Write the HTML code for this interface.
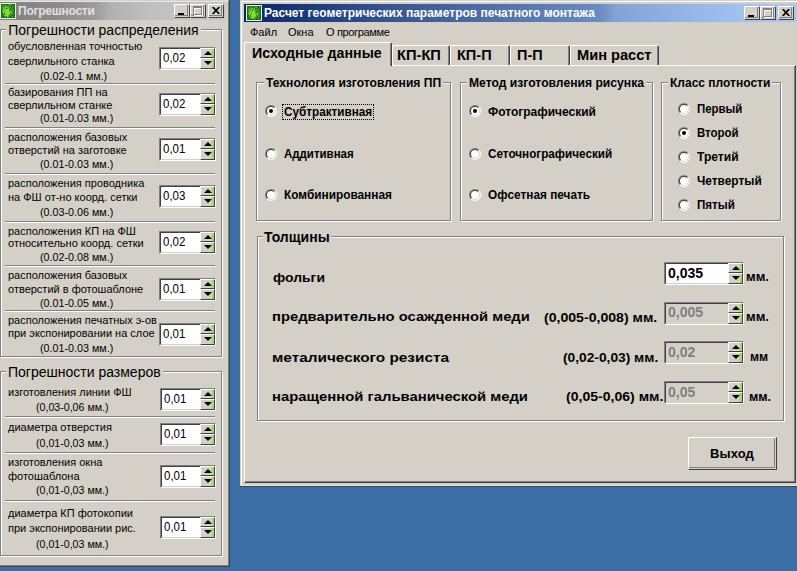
<!DOCTYPE html><html><head><meta charset="utf-8"><style>
html,body{margin:0;padding:0;width:797px;height:571px;overflow:hidden;background:#3a6ea5;position:relative}
body>div{position:absolute;box-sizing:content-box}
.t{white-space:pre;font-family:"Liberation Sans",sans-serif}
</style></head><body>
<svg width="0" height="0" style="position:absolute"><defs><clipPath id="rtl"><polygon points="0,0 12,0 0,12"/></clipPath><clipPath id="rbr"><polygon points="12,0 12,12 0,12"/></clipPath></defs></svg>
<div style="left:-10px;top:0px;width:240px;height:567px;background:#d4d0c8"></div>
<div style="left:-10px;top:1px;width:238px;height:1px;background:#e8e8e8"></div>
<div style="left:228px;top:1px;width:1px;height:565px;background:#808080"></div>
<div style="left:229px;top:0px;width:1px;height:567px;background:#404040"></div>
<div style="left:-10px;top:565px;width:238px;height:1px;background:#808080"></div>
<div style="left:-10px;top:566px;width:240px;height:1px;background:#404040"></div>
<div style="left:0px;top:2px;width:226px;height:18px;background:linear-gradient(to right,#808080 0px,#8c8c8c 60px,#9c9c9c 95px,#b0b0b0 110px,#c0c0c0 150px,#c6c6c6 226px)"></div>
<svg style="position:absolute;left:0px;top:3px" width="16" height="16" viewBox="0 0 16 16" shape-rendering="crispEdges"><rect x="0" y="0" width="16" height="16" fill="#e8f4d8"/><rect x="1" y="1" width="1" height="1" fill="#0e5a10"/><rect x="2" y="1" width="1" height="1" fill="#2e8a1a"/><rect x="3" y="1" width="1" height="1" fill="#0e5a10"/><rect x="4" y="1" width="1" height="1" fill="#2e8a1a"/><rect x="5" y="1" width="1" height="1" fill="#2e8a1a"/><rect x="6" y="1" width="1" height="1" fill="#0e5a10"/><rect x="7" y="1" width="1" height="1" fill="#2e8a1a"/><rect x="8" y="1" width="1" height="1" fill="#2e8a1a"/><rect x="9" y="1" width="1" height="1" fill="#58b828"/><rect x="10" y="1" width="1" height="1" fill="#2e8a1a"/><rect x="11" y="1" width="1" height="1" fill="#2e8a1a"/><rect x="12" y="1" width="1" height="1" fill="#0e5a10"/><rect x="13" y="1" width="1" height="1" fill="#2e8a1a"/><rect x="14" y="1" width="1" height="1" fill="#0e5a10"/><rect x="1" y="2" width="1" height="1" fill="#2e8a1a"/><rect x="2" y="2" width="1" height="1" fill="#0e5a10"/><rect x="3" y="2" width="1" height="1" fill="#58b828"/><rect x="4" y="2" width="1" height="1" fill="#2e8a1a"/><rect x="5" y="2" width="1" height="1" fill="#2e8a1a"/><rect x="6" y="2" width="1" height="1" fill="#58b828"/><rect x="7" y="2" width="1" height="1" fill="#0e5a10"/><rect x="8" y="2" width="1" height="1" fill="#2e8a1a"/><rect x="9" y="2" width="1" height="1" fill="#2e8a1a"/><rect x="10" y="2" width="1" height="1" fill="#58b828"/><rect x="11" y="2" width="1" height="1" fill="#2e8a1a"/><rect x="12" y="2" width="1" height="1" fill="#0e5a10"/><rect x="13" y="2" width="1" height="1" fill="#2e8a1a"/><rect x="14" y="2" width="1" height="1" fill="#0e5a10"/><rect x="1" y="3" width="1" height="1" fill="#0e5a10"/><rect x="2" y="3" width="1" height="1" fill="#2e8a1a"/><rect x="3" y="3" width="1" height="1" fill="#58b828"/><rect x="4" y="3" width="1" height="1" fill="#2e8a1a"/><rect x="5" y="3" width="1" height="1" fill="#58b828"/><rect x="6" y="3" width="1" height="1" fill="#88e030"/><rect x="7" y="3" width="1" height="1" fill="#2e8a1a"/><rect x="8" y="3" width="1" height="1" fill="#58b828"/><rect x="9" y="3" width="1" height="1" fill="#2e8a1a"/><rect x="10" y="3" width="1" height="1" fill="#2e8a1a"/><rect x="11" y="3" width="1" height="1" fill="#0e5a10"/><rect x="12" y="3" width="1" height="1" fill="#58b828"/><rect x="13" y="3" width="1" height="1" fill="#2e8a1a"/><rect x="14" y="3" width="1" height="1" fill="#0e5a10"/><rect x="1" y="4" width="1" height="1" fill="#2e8a1a"/><rect x="2" y="4" width="1" height="1" fill="#58b828"/><rect x="3" y="4" width="1" height="1" fill="#2e8a1a"/><rect x="4" y="4" width="1" height="1" fill="#58b828"/><rect x="5" y="4" width="1" height="1" fill="#88e030"/><rect x="6" y="4" width="1" height="1" fill="#2e8a1a"/><rect x="7" y="4" width="1" height="1" fill="#88e030"/><rect x="8" y="4" width="1" height="1" fill="#58b828"/><rect x="9" y="4" width="1" height="1" fill="#2e8a1a"/><rect x="10" y="4" width="1" height="1" fill="#58b828"/><rect x="11" y="4" width="1" height="1" fill="#2e8a1a"/><rect x="12" y="4" width="1" height="1" fill="#2e8a1a"/><rect x="13" y="4" width="1" height="1" fill="#0e5a10"/><rect x="14" y="4" width="1" height="1" fill="#2e8a1a"/><rect x="1" y="5" width="1" height="1" fill="#0e5a10"/><rect x="2" y="5" width="1" height="1" fill="#2e8a1a"/><rect x="3" y="5" width="1" height="1" fill="#a0a0b0"/><rect x="4" y="5" width="1" height="1" fill="#58b828"/><rect x="5" y="5" width="1" height="1" fill="#88e030"/><rect x="6" y="5" width="1" height="1" fill="#202820"/><rect x="7" y="5" width="1" height="1" fill="#58b828"/><rect x="8" y="5" width="1" height="1" fill="#88e030"/><rect x="9" y="5" width="1" height="1" fill="#2e8a1a"/><rect x="10" y="5" width="1" height="1" fill="#2e8a1a"/><rect x="11" y="5" width="1" height="1" fill="#58b828"/><rect x="12" y="5" width="1" height="1" fill="#2e8a1a"/><rect x="13" y="5" width="1" height="1" fill="#0e5a10"/><rect x="14" y="5" width="1" height="1" fill="#2e8a1a"/><rect x="1" y="6" width="1" height="1" fill="#2e8a1a"/><rect x="2" y="6" width="1" height="1" fill="#58b828"/><rect x="3" y="6" width="1" height="1" fill="#2e8a1a"/><rect x="4" y="6" width="1" height="1" fill="#88e030"/><rect x="5" y="6" width="1" height="1" fill="#58b828"/><rect x="6" y="6" width="1" height="1" fill="#88e030"/><rect x="7" y="6" width="1" height="1" fill="#88e030"/><rect x="8" y="6" width="1" height="1" fill="#88e030"/><rect x="9" y="6" width="1" height="1" fill="#58b828"/><rect x="10" y="6" width="1" height="1" fill="#2e8a1a"/><rect x="11" y="6" width="1" height="1" fill="#0e5a10"/><rect x="12" y="6" width="1" height="1" fill="#2e8a1a"/><rect x="13" y="6" width="1" height="1" fill="#58b828"/><rect x="14" y="6" width="1" height="1" fill="#0e5a10"/><rect x="1" y="7" width="1" height="1" fill="#0e5a10"/><rect x="2" y="7" width="1" height="1" fill="#2e8a1a"/><rect x="3" y="7" width="1" height="1" fill="#58b828"/><rect x="4" y="7" width="1" height="1" fill="#88e030"/><rect x="5" y="7" width="1" height="1" fill="#88e030"/><rect x="6" y="7" width="1" height="1" fill="#88e030"/><rect x="7" y="7" width="1" height="1" fill="#88e030"/><rect x="8" y="7" width="1" height="1" fill="#88e030"/><rect x="9" y="7" width="1" height="1" fill="#2e8a1a"/><rect x="10" y="7" width="1" height="1" fill="#58b828"/><rect x="11" y="7" width="1" height="1" fill="#2e8a1a"/><rect x="12" y="7" width="1" height="1" fill="#58b828"/><rect x="13" y="7" width="1" height="1" fill="#2e8a1a"/><rect x="14" y="7" width="1" height="1" fill="#0e5a10"/><rect x="1" y="8" width="1" height="1" fill="#2e8a1a"/><rect x="2" y="8" width="1" height="1" fill="#58b828"/><rect x="3" y="8" width="1" height="1" fill="#88e030"/><rect x="4" y="8" width="1" height="1" fill="#88e030"/><rect x="5" y="8" width="1" height="1" fill="#2e8a1a"/><rect x="6" y="8" width="1" height="1" fill="#88e030"/><rect x="7" y="8" width="1" height="1" fill="#88e030"/><rect x="8" y="8" width="1" height="1" fill="#88e030"/><rect x="9" y="8" width="1" height="1" fill="#58b828"/><rect x="10" y="8" width="1" height="1" fill="#2e8a1a"/><rect x="11" y="8" width="1" height="1" fill="#88e030"/><rect x="12" y="8" width="1" height="1" fill="#2e8a1a"/><rect x="13" y="8" width="1" height="1" fill="#0e5a10"/><rect x="14" y="8" width="1" height="1" fill="#2e8a1a"/><rect x="1" y="9" width="1" height="1" fill="#0e5a10"/><rect x="2" y="9" width="1" height="1" fill="#2e8a1a"/><rect x="3" y="9" width="1" height="1" fill="#88e030"/><rect x="4" y="9" width="1" height="1" fill="#58b828"/><rect x="5" y="9" width="1" height="1" fill="#88e030"/><rect x="6" y="9" width="1" height="1" fill="#88e030"/><rect x="7" y="9" width="1" height="1" fill="#88e030"/><rect x="8" y="9" width="1" height="1" fill="#88e030"/><rect x="9" y="9" width="1" height="1" fill="#88e030"/><rect x="10" y="9" width="1" height="1" fill="#58b828"/><rect x="11" y="9" width="1" height="1" fill="#88e030"/><rect x="12" y="9" width="1" height="1" fill="#2e8a1a"/><rect x="13" y="9" width="1" height="1" fill="#58b828"/><rect x="14" y="9" width="1" height="1" fill="#0e5a10"/><rect x="1" y="10" width="1" height="1" fill="#2e8a1a"/><rect x="2" y="10" width="1" height="1" fill="#0e5a10"/><rect x="3" y="10" width="1" height="1" fill="#58b828"/><rect x="4" y="10" width="1" height="1" fill="#2e8a1a"/><rect x="5" y="10" width="1" height="1" fill="#88e030"/><rect x="6" y="10" width="1" height="1" fill="#88e030"/><rect x="7" y="10" width="1" height="1" fill="#88e030"/><rect x="8" y="10" width="1" height="1" fill="#88e030"/><rect x="9" y="10" width="1" height="1" fill="#88e030"/><rect x="10" y="10" width="1" height="1" fill="#2e8a1a"/><rect x="11" y="10" width="1" height="1" fill="#58b828"/><rect x="12" y="10" width="1" height="1" fill="#2e8a1a"/><rect x="13" y="10" width="1" height="1" fill="#0e5a10"/><rect x="14" y="10" width="1" height="1" fill="#2e8a1a"/><rect x="1" y="11" width="1" height="1" fill="#0e5a10"/><rect x="2" y="11" width="1" height="1" fill="#2e8a1a"/><rect x="3" y="11" width="1" height="1" fill="#58b828"/><rect x="4" y="11" width="1" height="1" fill="#2e8a1a"/><rect x="5" y="11" width="1" height="1" fill="#58b828"/><rect x="6" y="11" width="1" height="1" fill="#88e030"/><rect x="7" y="11" width="1" height="1" fill="#88e030"/><rect x="8" y="11" width="1" height="1" fill="#58b828"/><rect x="9" y="11" width="1" height="1" fill="#88e030"/><rect x="10" y="11" width="1" height="1" fill="#2e8a1a"/><rect x="11" y="11" width="1" height="1" fill="#0e5a10"/><rect x="12" y="11" width="1" height="1" fill="#58b828"/><rect x="13" y="11" width="1" height="1" fill="#2e8a1a"/><rect x="14" y="11" width="1" height="1" fill="#0e5a10"/><rect x="1" y="12" width="1" height="1" fill="#2e8a1a"/><rect x="2" y="12" width="1" height="1" fill="#0e5a10"/><rect x="3" y="12" width="1" height="1" fill="#2e8a1a"/><rect x="4" y="12" width="1" height="1" fill="#58b828"/><rect x="5" y="12" width="1" height="1" fill="#88e030"/><rect x="6" y="12" width="1" height="1" fill="#88e030"/><rect x="7" y="12" width="1" height="1" fill="#88e030"/><rect x="8" y="12" width="1" height="1" fill="#58b828"/><rect x="9" y="12" width="1" height="1" fill="#2e8a1a"/><rect x="10" y="12" width="1" height="1" fill="#58b828"/><rect x="11" y="12" width="1" height="1" fill="#2e8a1a"/><rect x="12" y="12" width="1" height="1" fill="#0e5a10"/><rect x="13" y="12" width="1" height="1" fill="#2e8a1a"/><rect x="14" y="12" width="1" height="1" fill="#0e5a10"/><rect x="1" y="13" width="1" height="1" fill="#0e5a10"/><rect x="2" y="13" width="1" height="1" fill="#2e8a1a"/><rect x="3" y="13" width="1" height="1" fill="#0e5a10"/><rect x="4" y="13" width="1" height="1" fill="#2e8a1a"/><rect x="5" y="13" width="1" height="1" fill="#58b828"/><rect x="6" y="13" width="1" height="1" fill="#2e8a1a"/><rect x="7" y="13" width="1" height="1" fill="#88e030"/><rect x="8" y="13" width="1" height="1" fill="#58b828"/><rect x="9" y="13" width="1" height="1" fill="#2e8a1a"/><rect x="10" y="13" width="1" height="1" fill="#0e5a10"/><rect x="11" y="13" width="1" height="1" fill="#2e8a1a"/><rect x="12" y="13" width="1" height="1" fill="#58b828"/><rect x="13" y="13" width="1" height="1" fill="#0e5a10"/><rect x="14" y="13" width="1" height="1" fill="#2e8a1a"/><rect x="1" y="14" width="1" height="1" fill="#2e8a1a"/><rect x="2" y="14" width="1" height="1" fill="#0e5a10"/><rect x="3" y="14" width="1" height="1" fill="#2e8a1a"/><rect x="4" y="14" width="1" height="1" fill="#0e5a10"/><rect x="5" y="14" width="1" height="1" fill="#2e8a1a"/><rect x="6" y="14" width="1" height="1" fill="#0e5a10"/><rect x="7" y="14" width="1" height="1" fill="#2e8a1a"/><rect x="8" y="14" width="1" height="1" fill="#0e5a10"/><rect x="9" y="14" width="1" height="1" fill="#2e8a1a"/><rect x="10" y="14" width="1" height="1" fill="#0e5a10"/><rect x="11" y="14" width="1" height="1" fill="#2e8a1a"/><rect x="12" y="14" width="1" height="1" fill="#0e5a10"/><rect x="13" y="14" width="1" height="1" fill="#2e8a1a"/><rect x="14" y="14" width="1" height="1" fill="#0e5a10"/></svg>
<div class="t" style="left:18px;top:4.6px;font-size:12px;line-height:12px;font-weight:bold;color:#e4e0dc;letter-spacing:-0.25px;">Погрешности</div>
<div style="left:174px;top:4px;width:14px;height:12px;border-top:1px solid #fff;border-left:1px solid #fff;border-right:1px solid #404040;border-bottom:1px solid #404040;background:#d4d0c8"></div>
<div style="left:175px;top:5px;width:12px;height:10px;border-right:1px solid #808080;border-bottom:1px solid #808080;"></div>
<div style="left:178px;top:13px;width:6px;height:2px;background:#000"></div>
<div style="left:190px;top:4px;width:14px;height:12px;border-top:1px solid #fff;border-left:1px solid #fff;border-right:1px solid #404040;border-bottom:1px solid #404040;background:#d4d0c8"></div>
<div style="left:191px;top:5px;width:12px;height:10px;border-right:1px solid #808080;border-bottom:1px solid #808080;"></div>
<div style="left:194px;top:7px;width:7px;height:6px;border:1px solid #fff;border-top-width:2px"></div>
<div style="left:193px;top:6px;width:7px;height:6px;border:1px solid #808080;border-top-width:2px"></div>
<div style="left:208px;top:4px;width:14px;height:12px;border-top:1px solid #fff;border-left:1px solid #fff;border-right:1px solid #404040;border-bottom:1px solid #404040;background:#d4d0c8"></div>
<div style="left:209px;top:5px;width:12px;height:10px;border-right:1px solid #808080;border-bottom:1px solid #808080;"></div>
<svg style="position:absolute;left:212px;top:7px" width="8" height="7" viewBox="0 0 8 7"><path d="M0.7 0 L7.3 7 M7.3 0 L0.7 7" stroke="#000" stroke-width="1.7"/></svg>
<div style="left:1px;top:30px;width:220px;height:326px;border:1px solid #fff;"></div>
<div style="left:0px;top:29px;width:220px;height:326px;border:1px solid #808080;"></div>
<div style="left:1px;top:372px;width:220px;height:183px;border:1px solid #fff;"></div>
<div style="left:0px;top:371px;width:220px;height:183px;border:1px solid #808080;"></div>
<div class="t" style="left:6.2px;top:23px;font-size:14px;line-height:14px;background:#d4d0c8;padding:0 2px">Погрешности распределения</div>
<div class="t" style="left:6px;top:364.5px;font-size:14px;line-height:14px;background:#d4d0c8;padding:0 2px">Погрешности размеров</div>
<div class="t" style="left:8px;top:40.65px;font-size:11px;line-height:11px;font-weight:normal;color:#000;letter-spacing:0px;">обусловленная точностью</div>
<div class="t" style="left:8px;top:55.65px;font-size:11px;line-height:11px;font-weight:normal;color:#000;letter-spacing:0px;">сверлильного станка</div>
<div class="t" style="left:40px;top:71.45px;font-size:11px;line-height:11px;font-weight:normal;color:#000;transform:scaleX(0.9748);transform-origin:0 0;">(0.02-0.1 мм.)</div>
<div style="left:159px;top:47px;width:55px;height:21px;border-top:1px solid #808080;border-left:1px solid #808080;border-right:1px solid #fff;border-bottom:1px solid #fff;"></div>
<div style="left:160px;top:48px;width:39px;height:19px;border-top:1px solid #404040;border-left:1px solid #404040;border-bottom:1px solid #d4d0c8;background:#fff"></div>
<div style="left:200px;top:48px;width:13px;height:8px;border-top:1px solid #fff;border-left:1px solid #fff;border-right:1px solid #404040;border-bottom:1px solid #404040;background:linear-gradient(to right,#d4d0c8 0,#d4d0c8 66%,#c8e0b0 74%,#a0e060 86%,#b0c0a0 100%)"></div>
<svg style="position:absolute;left:203.5px;top:51px" width="8" height="4" viewBox="0 0 8 4"><path d="M4 0 L8 4 L0 4 Z" fill="#000"/></svg>
<div style="left:200px;top:58px;width:13px;height:9px;border-top:1px solid #fff;border-left:1px solid #fff;border-right:1px solid #404040;border-bottom:1px solid #404040;background:linear-gradient(to right,#d4d0c8 0,#d4d0c8 66%,#c8e0b0 74%,#a0e060 86%,#b0c0a0 100%)"></div>
<svg style="position:absolute;left:203.5px;top:61px" width="8" height="4" viewBox="0 0 8 4"><path d="M0 0 L8 0 L4 4 Z" fill="#000"/></svg>
<div class="t" style="left:163px;top:50.52px;font-size:13.5px;line-height:13.5px;font-weight:normal;color:#000;letter-spacing:0px;transform:scaleX(0.85);transform-origin:0 0">0,02</div>
<div style="left:5px;top:83px;width:210px;height:1px;background:#808080"></div>
<div style="left:5px;top:84px;width:210px;height:1px;background:#fff"></div>
<div class="t" style="left:8px;top:86.65px;font-size:11px;line-height:11px;font-weight:normal;color:#000;letter-spacing:0px;">базирования ПП на</div>
<div class="t" style="left:8px;top:100.15px;font-size:11px;line-height:11px;font-weight:normal;color:#000;letter-spacing:0px;">сверлильном станке</div>
<div class="t" style="left:40px;top:112.95px;font-size:11px;line-height:11px;font-weight:normal;color:#000;transform:scaleX(0.9767);transform-origin:0 0;">(0.01-0.03 мм.)</div>
<div style="left:159px;top:93px;width:55px;height:21px;border-top:1px solid #808080;border-left:1px solid #808080;border-right:1px solid #fff;border-bottom:1px solid #fff;"></div>
<div style="left:160px;top:94px;width:39px;height:19px;border-top:1px solid #404040;border-left:1px solid #404040;border-bottom:1px solid #d4d0c8;background:#fff"></div>
<div style="left:200px;top:94px;width:13px;height:8px;border-top:1px solid #fff;border-left:1px solid #fff;border-right:1px solid #404040;border-bottom:1px solid #404040;background:linear-gradient(to right,#d4d0c8 0,#d4d0c8 66%,#c8e0b0 74%,#a0e060 86%,#b0c0a0 100%)"></div>
<svg style="position:absolute;left:203.5px;top:97px" width="8" height="4" viewBox="0 0 8 4"><path d="M4 0 L8 4 L0 4 Z" fill="#000"/></svg>
<div style="left:200px;top:104px;width:13px;height:9px;border-top:1px solid #fff;border-left:1px solid #fff;border-right:1px solid #404040;border-bottom:1px solid #404040;background:linear-gradient(to right,#d4d0c8 0,#d4d0c8 66%,#c8e0b0 74%,#a0e060 86%,#b0c0a0 100%)"></div>
<svg style="position:absolute;left:203.5px;top:107px" width="8" height="4" viewBox="0 0 8 4"><path d="M0 0 L8 0 L4 4 Z" fill="#000"/></svg>
<div class="t" style="left:163px;top:96.53px;font-size:13.5px;line-height:13.5px;font-weight:normal;color:#000;letter-spacing:0px;transform:scaleX(0.85);transform-origin:0 0">0,02</div>
<div style="left:5px;top:127px;width:210px;height:1px;background:#808080"></div>
<div style="left:5px;top:128px;width:210px;height:1px;background:#fff"></div>
<div class="t" style="left:8px;top:131.65px;font-size:11px;line-height:11px;font-weight:normal;color:#000;letter-spacing:0px;">расположения базовых</div>
<div class="t" style="left:8px;top:144.65px;font-size:11px;line-height:11px;font-weight:normal;color:#000;letter-spacing:0px;">отверстий на заготовке</div>
<div class="t" style="left:40px;top:159.45px;font-size:11px;line-height:11px;font-weight:normal;color:#000;transform:scaleX(0.9767);transform-origin:0 0;">(0.01-0.03 мм.)</div>
<div style="left:159px;top:138px;width:55px;height:21px;border-top:1px solid #808080;border-left:1px solid #808080;border-right:1px solid #fff;border-bottom:1px solid #fff;"></div>
<div style="left:160px;top:139px;width:39px;height:19px;border-top:1px solid #404040;border-left:1px solid #404040;border-bottom:1px solid #d4d0c8;background:#fff"></div>
<div style="left:200px;top:139px;width:13px;height:8px;border-top:1px solid #fff;border-left:1px solid #fff;border-right:1px solid #404040;border-bottom:1px solid #404040;background:linear-gradient(to right,#d4d0c8 0,#d4d0c8 66%,#c8e0b0 74%,#a0e060 86%,#b0c0a0 100%)"></div>
<svg style="position:absolute;left:203.5px;top:142px" width="8" height="4" viewBox="0 0 8 4"><path d="M4 0 L8 4 L0 4 Z" fill="#000"/></svg>
<div style="left:200px;top:149px;width:13px;height:9px;border-top:1px solid #fff;border-left:1px solid #fff;border-right:1px solid #404040;border-bottom:1px solid #404040;background:linear-gradient(to right,#d4d0c8 0,#d4d0c8 66%,#c8e0b0 74%,#a0e060 86%,#b0c0a0 100%)"></div>
<svg style="position:absolute;left:203.5px;top:152px" width="8" height="4" viewBox="0 0 8 4"><path d="M0 0 L8 0 L4 4 Z" fill="#000"/></svg>
<div class="t" style="left:163px;top:141.53px;font-size:13.5px;line-height:13.5px;font-weight:normal;color:#000;letter-spacing:0px;transform:scaleX(0.85);transform-origin:0 0">0,01</div>
<div style="left:5px;top:173px;width:210px;height:1px;background:#808080"></div>
<div style="left:5px;top:174px;width:210px;height:1px;background:#fff"></div>
<div class="t" style="left:8px;top:177.65px;font-size:11px;line-height:11px;font-weight:normal;color:#000;letter-spacing:0px;">расположения проводника</div>
<div class="t" style="left:8px;top:191.65px;font-size:11px;line-height:11px;font-weight:normal;color:#000;letter-spacing:0px;">на ФШ от-но коорд. сетки</div>
<div class="t" style="left:40px;top:207.45px;font-size:11px;line-height:11px;font-weight:normal;color:#000;transform:scaleX(0.9767);transform-origin:0 0;">(0.03-0.06 мм.)</div>
<div style="left:159px;top:185px;width:55px;height:21px;border-top:1px solid #808080;border-left:1px solid #808080;border-right:1px solid #fff;border-bottom:1px solid #fff;"></div>
<div style="left:160px;top:186px;width:39px;height:19px;border-top:1px solid #404040;border-left:1px solid #404040;border-bottom:1px solid #d4d0c8;background:#fff"></div>
<div style="left:200px;top:186px;width:13px;height:8px;border-top:1px solid #fff;border-left:1px solid #fff;border-right:1px solid #404040;border-bottom:1px solid #404040;background:linear-gradient(to right,#d4d0c8 0,#d4d0c8 66%,#c8e0b0 74%,#a0e060 86%,#b0c0a0 100%)"></div>
<svg style="position:absolute;left:203.5px;top:189px" width="8" height="4" viewBox="0 0 8 4"><path d="M4 0 L8 4 L0 4 Z" fill="#000"/></svg>
<div style="left:200px;top:196px;width:13px;height:9px;border-top:1px solid #fff;border-left:1px solid #fff;border-right:1px solid #404040;border-bottom:1px solid #404040;background:linear-gradient(to right,#d4d0c8 0,#d4d0c8 66%,#c8e0b0 74%,#a0e060 86%,#b0c0a0 100%)"></div>
<svg style="position:absolute;left:203.5px;top:199px" width="8" height="4" viewBox="0 0 8 4"><path d="M0 0 L8 0 L4 4 Z" fill="#000"/></svg>
<div class="t" style="left:163px;top:188.53px;font-size:13.5px;line-height:13.5px;font-weight:normal;color:#000;letter-spacing:0px;transform:scaleX(0.85);transform-origin:0 0">0,03</div>
<div style="left:5px;top:221px;width:210px;height:1px;background:#808080"></div>
<div style="left:5px;top:222px;width:210px;height:1px;background:#fff"></div>
<div class="t" style="left:8px;top:225.65px;font-size:11px;line-height:11px;font-weight:normal;color:#000;letter-spacing:0px;">расположения КП на ФШ</div>
<div class="t" style="left:8px;top:237.65px;font-size:11px;line-height:11px;font-weight:normal;color:#000;letter-spacing:0px;">относительно коорд. сетки</div>
<div class="t" style="left:40px;top:252.45px;font-size:11px;line-height:11px;font-weight:normal;color:#000;transform:scaleX(0.9767);transform-origin:0 0;">(0.02-0.08 мм.)</div>
<div style="left:159px;top:231px;width:55px;height:21px;border-top:1px solid #808080;border-left:1px solid #808080;border-right:1px solid #fff;border-bottom:1px solid #fff;"></div>
<div style="left:160px;top:232px;width:39px;height:19px;border-top:1px solid #404040;border-left:1px solid #404040;border-bottom:1px solid #d4d0c8;background:#fff"></div>
<div style="left:200px;top:232px;width:13px;height:8px;border-top:1px solid #fff;border-left:1px solid #fff;border-right:1px solid #404040;border-bottom:1px solid #404040;background:linear-gradient(to right,#d4d0c8 0,#d4d0c8 66%,#c8e0b0 74%,#a0e060 86%,#b0c0a0 100%)"></div>
<svg style="position:absolute;left:203.5px;top:235px" width="8" height="4" viewBox="0 0 8 4"><path d="M4 0 L8 4 L0 4 Z" fill="#000"/></svg>
<div style="left:200px;top:242px;width:13px;height:9px;border-top:1px solid #fff;border-left:1px solid #fff;border-right:1px solid #404040;border-bottom:1px solid #404040;background:linear-gradient(to right,#d4d0c8 0,#d4d0c8 66%,#c8e0b0 74%,#a0e060 86%,#b0c0a0 100%)"></div>
<svg style="position:absolute;left:203.5px;top:245px" width="8" height="4" viewBox="0 0 8 4"><path d="M0 0 L8 0 L4 4 Z" fill="#000"/></svg>
<div class="t" style="left:163px;top:234.53px;font-size:13.5px;line-height:13.5px;font-weight:normal;color:#000;letter-spacing:0px;transform:scaleX(0.85);transform-origin:0 0">0,02</div>
<div style="left:5px;top:265px;width:210px;height:1px;background:#808080"></div>
<div style="left:5px;top:266px;width:210px;height:1px;background:#fff"></div>
<div class="t" style="left:8px;top:269.65px;font-size:11px;line-height:11px;font-weight:normal;color:#000;letter-spacing:0px;">расположения базовых</div>
<div class="t" style="left:8px;top:283.65px;font-size:11px;line-height:11px;font-weight:normal;color:#000;letter-spacing:0px;">отверстий в фотошаблоне</div>
<div class="t" style="left:40px;top:297.95px;font-size:11px;line-height:11px;font-weight:normal;color:#000;transform:scaleX(0.9767);transform-origin:0 0;">(0.01-0.05 мм.)</div>
<div style="left:159px;top:278px;width:55px;height:21px;border-top:1px solid #808080;border-left:1px solid #808080;border-right:1px solid #fff;border-bottom:1px solid #fff;"></div>
<div style="left:160px;top:279px;width:39px;height:19px;border-top:1px solid #404040;border-left:1px solid #404040;border-bottom:1px solid #d4d0c8;background:#fff"></div>
<div style="left:200px;top:279px;width:13px;height:8px;border-top:1px solid #fff;border-left:1px solid #fff;border-right:1px solid #404040;border-bottom:1px solid #404040;background:linear-gradient(to right,#d4d0c8 0,#d4d0c8 66%,#c8e0b0 74%,#a0e060 86%,#b0c0a0 100%)"></div>
<svg style="position:absolute;left:203.5px;top:282px" width="8" height="4" viewBox="0 0 8 4"><path d="M4 0 L8 4 L0 4 Z" fill="#000"/></svg>
<div style="left:200px;top:289px;width:13px;height:9px;border-top:1px solid #fff;border-left:1px solid #fff;border-right:1px solid #404040;border-bottom:1px solid #404040;background:linear-gradient(to right,#d4d0c8 0,#d4d0c8 66%,#c8e0b0 74%,#a0e060 86%,#b0c0a0 100%)"></div>
<svg style="position:absolute;left:203.5px;top:292px" width="8" height="4" viewBox="0 0 8 4"><path d="M0 0 L8 0 L4 4 Z" fill="#000"/></svg>
<div class="t" style="left:163px;top:281.52px;font-size:13.5px;line-height:13.5px;font-weight:normal;color:#000;letter-spacing:0px;transform:scaleX(0.85);transform-origin:0 0">0,01</div>
<div style="left:5px;top:310px;width:210px;height:1px;background:#808080"></div>
<div style="left:5px;top:311px;width:210px;height:1px;background:#fff"></div>
<div class="t" style="left:8px;top:314.65px;font-size:11px;line-height:11px;font-weight:normal;color:#000;letter-spacing:0px;">расположения печатных э-ов</div>
<div class="t" style="left:8px;top:328.15px;font-size:11px;line-height:11px;font-weight:normal;color:#000;letter-spacing:0px;">при экспонировании на слое</div>
<div class="t" style="left:40px;top:342.95px;font-size:11px;line-height:11px;font-weight:normal;color:#000;transform:scaleX(0.9767);transform-origin:0 0;">(0.01-0.03 мм.)</div>
<div style="left:159px;top:323px;width:55px;height:21px;border-top:1px solid #808080;border-left:1px solid #808080;border-right:1px solid #fff;border-bottom:1px solid #fff;"></div>
<div style="left:160px;top:324px;width:39px;height:19px;border-top:1px solid #404040;border-left:1px solid #404040;border-bottom:1px solid #d4d0c8;background:#fff"></div>
<div style="left:200px;top:324px;width:13px;height:8px;border-top:1px solid #fff;border-left:1px solid #fff;border-right:1px solid #404040;border-bottom:1px solid #404040;background:linear-gradient(to right,#d4d0c8 0,#d4d0c8 66%,#c8e0b0 74%,#a0e060 86%,#b0c0a0 100%)"></div>
<svg style="position:absolute;left:203.5px;top:327px" width="8" height="4" viewBox="0 0 8 4"><path d="M4 0 L8 4 L0 4 Z" fill="#000"/></svg>
<div style="left:200px;top:334px;width:13px;height:9px;border-top:1px solid #fff;border-left:1px solid #fff;border-right:1px solid #404040;border-bottom:1px solid #404040;background:linear-gradient(to right,#d4d0c8 0,#d4d0c8 66%,#c8e0b0 74%,#a0e060 86%,#b0c0a0 100%)"></div>
<svg style="position:absolute;left:203.5px;top:337px" width="8" height="4" viewBox="0 0 8 4"><path d="M0 0 L8 0 L4 4 Z" fill="#000"/></svg>
<div class="t" style="left:163px;top:326.52px;font-size:13.5px;line-height:13.5px;font-weight:normal;color:#000;letter-spacing:0px;transform:scaleX(0.85);transform-origin:0 0">0,01</div>
<div class="t" style="left:8px;top:386.65px;font-size:11px;line-height:11px;font-weight:normal;color:#000;letter-spacing:0px;">изготовления линии ФШ</div>
<div class="t" style="left:36px;top:401.95px;font-size:11px;line-height:11px;font-weight:normal;color:#000;transform:scaleX(0.9661);transform-origin:0 0;">(0,03-0,06 мм.)</div>
<div style="left:160px;top:388px;width:54px;height:21px;border-top:1px solid #808080;border-left:1px solid #808080;border-right:1px solid #fff;border-bottom:1px solid #fff;"></div>
<div style="left:161px;top:389px;width:38px;height:19px;border-top:1px solid #404040;border-left:1px solid #404040;border-bottom:1px solid #d4d0c8;background:#fff"></div>
<div style="left:200px;top:389px;width:13px;height:8px;border-top:1px solid #fff;border-left:1px solid #fff;border-right:1px solid #404040;border-bottom:1px solid #404040;background:linear-gradient(to right,#d4d0c8 0,#d4d0c8 66%,#c8e0b0 74%,#a0e060 86%,#b0c0a0 100%)"></div>
<svg style="position:absolute;left:203.5px;top:392px" width="8" height="4" viewBox="0 0 8 4"><path d="M4 0 L8 4 L0 4 Z" fill="#000"/></svg>
<div style="left:200px;top:399px;width:13px;height:9px;border-top:1px solid #fff;border-left:1px solid #fff;border-right:1px solid #404040;border-bottom:1px solid #404040;background:linear-gradient(to right,#d4d0c8 0,#d4d0c8 66%,#c8e0b0 74%,#a0e060 86%,#b0c0a0 100%)"></div>
<svg style="position:absolute;left:203.5px;top:402px" width="8" height="4" viewBox="0 0 8 4"><path d="M0 0 L8 0 L4 4 Z" fill="#000"/></svg>
<div class="t" style="left:164px;top:391.52px;font-size:13.5px;line-height:13.5px;font-weight:normal;color:#000;letter-spacing:0px;transform:scaleX(0.85);transform-origin:0 0">0,01</div>
<div style="left:5px;top:416px;width:210px;height:1px;background:#808080"></div>
<div style="left:5px;top:417px;width:210px;height:1px;background:#fff"></div>
<div class="t" style="left:8px;top:422.15px;font-size:11px;line-height:11px;font-weight:normal;color:#000;letter-spacing:0px;">диаметра отверстия</div>
<div class="t" style="left:36px;top:438.45px;font-size:11px;line-height:11px;font-weight:normal;color:#000;transform:scaleX(0.9661);transform-origin:0 0;">(0,01-0,03 мм.)</div>
<div style="left:160px;top:423px;width:54px;height:21px;border-top:1px solid #808080;border-left:1px solid #808080;border-right:1px solid #fff;border-bottom:1px solid #fff;"></div>
<div style="left:161px;top:424px;width:38px;height:19px;border-top:1px solid #404040;border-left:1px solid #404040;border-bottom:1px solid #d4d0c8;background:#fff"></div>
<div style="left:200px;top:424px;width:13px;height:8px;border-top:1px solid #fff;border-left:1px solid #fff;border-right:1px solid #404040;border-bottom:1px solid #404040;background:linear-gradient(to right,#d4d0c8 0,#d4d0c8 66%,#c8e0b0 74%,#a0e060 86%,#b0c0a0 100%)"></div>
<svg style="position:absolute;left:203.5px;top:427px" width="8" height="4" viewBox="0 0 8 4"><path d="M4 0 L8 4 L0 4 Z" fill="#000"/></svg>
<div style="left:200px;top:434px;width:13px;height:9px;border-top:1px solid #fff;border-left:1px solid #fff;border-right:1px solid #404040;border-bottom:1px solid #404040;background:linear-gradient(to right,#d4d0c8 0,#d4d0c8 66%,#c8e0b0 74%,#a0e060 86%,#b0c0a0 100%)"></div>
<svg style="position:absolute;left:203.5px;top:437px" width="8" height="4" viewBox="0 0 8 4"><path d="M0 0 L8 0 L4 4 Z" fill="#000"/></svg>
<div class="t" style="left:164px;top:426.52px;font-size:13.5px;line-height:13.5px;font-weight:normal;color:#000;letter-spacing:0px;transform:scaleX(0.85);transform-origin:0 0">0,01</div>
<div style="left:5px;top:452px;width:210px;height:1px;background:#808080"></div>
<div style="left:5px;top:453px;width:210px;height:1px;background:#fff"></div>
<div class="t" style="left:8px;top:456.65px;font-size:11px;line-height:11px;font-weight:normal;color:#000;letter-spacing:0px;">изготовления окна</div>
<div class="t" style="left:8px;top:470.65px;font-size:11px;line-height:11px;font-weight:normal;color:#000;letter-spacing:0px;">фотошаблона</div>
<div class="t" style="left:36px;top:485.45px;font-size:11px;line-height:11px;font-weight:normal;color:#000;transform:scaleX(0.9661);transform-origin:0 0;">(0,01-0,03 мм.)</div>
<div style="left:160px;top:465px;width:54px;height:21px;border-top:1px solid #808080;border-left:1px solid #808080;border-right:1px solid #fff;border-bottom:1px solid #fff;"></div>
<div style="left:161px;top:466px;width:38px;height:19px;border-top:1px solid #404040;border-left:1px solid #404040;border-bottom:1px solid #d4d0c8;background:#fff"></div>
<div style="left:200px;top:466px;width:13px;height:8px;border-top:1px solid #fff;border-left:1px solid #fff;border-right:1px solid #404040;border-bottom:1px solid #404040;background:linear-gradient(to right,#d4d0c8 0,#d4d0c8 66%,#c8e0b0 74%,#a0e060 86%,#b0c0a0 100%)"></div>
<svg style="position:absolute;left:203.5px;top:469px" width="8" height="4" viewBox="0 0 8 4"><path d="M4 0 L8 4 L0 4 Z" fill="#000"/></svg>
<div style="left:200px;top:476px;width:13px;height:9px;border-top:1px solid #fff;border-left:1px solid #fff;border-right:1px solid #404040;border-bottom:1px solid #404040;background:linear-gradient(to right,#d4d0c8 0,#d4d0c8 66%,#c8e0b0 74%,#a0e060 86%,#b0c0a0 100%)"></div>
<svg style="position:absolute;left:203.5px;top:479px" width="8" height="4" viewBox="0 0 8 4"><path d="M0 0 L8 0 L4 4 Z" fill="#000"/></svg>
<div class="t" style="left:164px;top:468.52px;font-size:13.5px;line-height:13.5px;font-weight:normal;color:#000;letter-spacing:0px;transform:scaleX(0.85);transform-origin:0 0">0,01</div>
<div style="left:5px;top:500px;width:210px;height:1px;background:#808080"></div>
<div style="left:5px;top:501px;width:210px;height:1px;background:#fff"></div>
<div class="t" style="left:8px;top:507.65px;font-size:11px;line-height:11px;font-weight:normal;color:#000;letter-spacing:0px;">диаметра КП фотокопии</div>
<div class="t" style="left:8px;top:522.65px;font-size:11px;line-height:11px;font-weight:normal;color:#000;letter-spacing:0px;">при экспонировании рис.</div>
<div class="t" style="left:36px;top:539.45px;font-size:11px;line-height:11px;font-weight:normal;color:#000;transform:scaleX(0.9661);transform-origin:0 0;">(0,01-0,03 мм.)</div>
<div style="left:160px;top:516px;width:54px;height:21px;border-top:1px solid #808080;border-left:1px solid #808080;border-right:1px solid #fff;border-bottom:1px solid #fff;"></div>
<div style="left:161px;top:517px;width:38px;height:19px;border-top:1px solid #404040;border-left:1px solid #404040;border-bottom:1px solid #d4d0c8;background:#fff"></div>
<div style="left:200px;top:517px;width:13px;height:8px;border-top:1px solid #fff;border-left:1px solid #fff;border-right:1px solid #404040;border-bottom:1px solid #404040;background:linear-gradient(to right,#d4d0c8 0,#d4d0c8 66%,#c8e0b0 74%,#a0e060 86%,#b0c0a0 100%)"></div>
<svg style="position:absolute;left:203.5px;top:520px" width="8" height="4" viewBox="0 0 8 4"><path d="M4 0 L8 4 L0 4 Z" fill="#000"/></svg>
<div style="left:200px;top:527px;width:13px;height:9px;border-top:1px solid #fff;border-left:1px solid #fff;border-right:1px solid #404040;border-bottom:1px solid #404040;background:linear-gradient(to right,#d4d0c8 0,#d4d0c8 66%,#c8e0b0 74%,#a0e060 86%,#b0c0a0 100%)"></div>
<svg style="position:absolute;left:203.5px;top:530px" width="8" height="4" viewBox="0 0 8 4"><path d="M0 0 L8 0 L4 4 Z" fill="#000"/></svg>
<div class="t" style="left:164px;top:519.52px;font-size:13.5px;line-height:13.5px;font-weight:normal;color:#000;letter-spacing:0px;transform:scaleX(0.85);transform-origin:0 0">0,01</div>
<div style="left:240px;top:0px;width:600px;height:487px;background:#d4d0c8"></div>
<div style="left:241px;top:1px;width:600px;height:1px;background:#fff"></div>
<div style="left:241px;top:1px;width:1px;height:485px;background:#fff"></div>
<div style="left:240px;top:486px;width:600px;height:1px;background:#404040"></div>
<div style="left:241px;top:485px;width:600px;height:1px;background:#f0e8d8"></div>
<div style="left:244px;top:4px;width:553px;height:18px;background:linear-gradient(to right,#0a246a 0px,#33528e 136px,#6a8cc4 356px,#82a2d8 371px,#a0c2f0 496px,#a6caf0 553px)"></div>
<svg style="position:absolute;left:246px;top:5px" width="16" height="16" viewBox="0 0 16 16" shape-rendering="crispEdges"><rect x="0" y="0" width="16" height="16" fill="#e8f4d8"/><rect x="1" y="1" width="1" height="1" fill="#0e5a10"/><rect x="2" y="1" width="1" height="1" fill="#2e8a1a"/><rect x="3" y="1" width="1" height="1" fill="#0e5a10"/><rect x="4" y="1" width="1" height="1" fill="#2e8a1a"/><rect x="5" y="1" width="1" height="1" fill="#2e8a1a"/><rect x="6" y="1" width="1" height="1" fill="#0e5a10"/><rect x="7" y="1" width="1" height="1" fill="#2e8a1a"/><rect x="8" y="1" width="1" height="1" fill="#2e8a1a"/><rect x="9" y="1" width="1" height="1" fill="#58b828"/><rect x="10" y="1" width="1" height="1" fill="#2e8a1a"/><rect x="11" y="1" width="1" height="1" fill="#2e8a1a"/><rect x="12" y="1" width="1" height="1" fill="#0e5a10"/><rect x="13" y="1" width="1" height="1" fill="#2e8a1a"/><rect x="14" y="1" width="1" height="1" fill="#0e5a10"/><rect x="1" y="2" width="1" height="1" fill="#2e8a1a"/><rect x="2" y="2" width="1" height="1" fill="#0e5a10"/><rect x="3" y="2" width="1" height="1" fill="#58b828"/><rect x="4" y="2" width="1" height="1" fill="#2e8a1a"/><rect x="5" y="2" width="1" height="1" fill="#2e8a1a"/><rect x="6" y="2" width="1" height="1" fill="#58b828"/><rect x="7" y="2" width="1" height="1" fill="#0e5a10"/><rect x="8" y="2" width="1" height="1" fill="#2e8a1a"/><rect x="9" y="2" width="1" height="1" fill="#2e8a1a"/><rect x="10" y="2" width="1" height="1" fill="#58b828"/><rect x="11" y="2" width="1" height="1" fill="#2e8a1a"/><rect x="12" y="2" width="1" height="1" fill="#0e5a10"/><rect x="13" y="2" width="1" height="1" fill="#2e8a1a"/><rect x="14" y="2" width="1" height="1" fill="#0e5a10"/><rect x="1" y="3" width="1" height="1" fill="#0e5a10"/><rect x="2" y="3" width="1" height="1" fill="#2e8a1a"/><rect x="3" y="3" width="1" height="1" fill="#58b828"/><rect x="4" y="3" width="1" height="1" fill="#2e8a1a"/><rect x="5" y="3" width="1" height="1" fill="#58b828"/><rect x="6" y="3" width="1" height="1" fill="#88e030"/><rect x="7" y="3" width="1" height="1" fill="#2e8a1a"/><rect x="8" y="3" width="1" height="1" fill="#58b828"/><rect x="9" y="3" width="1" height="1" fill="#2e8a1a"/><rect x="10" y="3" width="1" height="1" fill="#2e8a1a"/><rect x="11" y="3" width="1" height="1" fill="#0e5a10"/><rect x="12" y="3" width="1" height="1" fill="#58b828"/><rect x="13" y="3" width="1" height="1" fill="#2e8a1a"/><rect x="14" y="3" width="1" height="1" fill="#0e5a10"/><rect x="1" y="4" width="1" height="1" fill="#2e8a1a"/><rect x="2" y="4" width="1" height="1" fill="#58b828"/><rect x="3" y="4" width="1" height="1" fill="#2e8a1a"/><rect x="4" y="4" width="1" height="1" fill="#58b828"/><rect x="5" y="4" width="1" height="1" fill="#88e030"/><rect x="6" y="4" width="1" height="1" fill="#2e8a1a"/><rect x="7" y="4" width="1" height="1" fill="#88e030"/><rect x="8" y="4" width="1" height="1" fill="#58b828"/><rect x="9" y="4" width="1" height="1" fill="#2e8a1a"/><rect x="10" y="4" width="1" height="1" fill="#58b828"/><rect x="11" y="4" width="1" height="1" fill="#2e8a1a"/><rect x="12" y="4" width="1" height="1" fill="#2e8a1a"/><rect x="13" y="4" width="1" height="1" fill="#0e5a10"/><rect x="14" y="4" width="1" height="1" fill="#2e8a1a"/><rect x="1" y="5" width="1" height="1" fill="#0e5a10"/><rect x="2" y="5" width="1" height="1" fill="#2e8a1a"/><rect x="3" y="5" width="1" height="1" fill="#a0a0b0"/><rect x="4" y="5" width="1" height="1" fill="#58b828"/><rect x="5" y="5" width="1" height="1" fill="#88e030"/><rect x="6" y="5" width="1" height="1" fill="#202820"/><rect x="7" y="5" width="1" height="1" fill="#58b828"/><rect x="8" y="5" width="1" height="1" fill="#88e030"/><rect x="9" y="5" width="1" height="1" fill="#2e8a1a"/><rect x="10" y="5" width="1" height="1" fill="#2e8a1a"/><rect x="11" y="5" width="1" height="1" fill="#58b828"/><rect x="12" y="5" width="1" height="1" fill="#2e8a1a"/><rect x="13" y="5" width="1" height="1" fill="#0e5a10"/><rect x="14" y="5" width="1" height="1" fill="#2e8a1a"/><rect x="1" y="6" width="1" height="1" fill="#2e8a1a"/><rect x="2" y="6" width="1" height="1" fill="#58b828"/><rect x="3" y="6" width="1" height="1" fill="#2e8a1a"/><rect x="4" y="6" width="1" height="1" fill="#88e030"/><rect x="5" y="6" width="1" height="1" fill="#58b828"/><rect x="6" y="6" width="1" height="1" fill="#88e030"/><rect x="7" y="6" width="1" height="1" fill="#88e030"/><rect x="8" y="6" width="1" height="1" fill="#88e030"/><rect x="9" y="6" width="1" height="1" fill="#58b828"/><rect x="10" y="6" width="1" height="1" fill="#2e8a1a"/><rect x="11" y="6" width="1" height="1" fill="#0e5a10"/><rect x="12" y="6" width="1" height="1" fill="#2e8a1a"/><rect x="13" y="6" width="1" height="1" fill="#58b828"/><rect x="14" y="6" width="1" height="1" fill="#0e5a10"/><rect x="1" y="7" width="1" height="1" fill="#0e5a10"/><rect x="2" y="7" width="1" height="1" fill="#2e8a1a"/><rect x="3" y="7" width="1" height="1" fill="#58b828"/><rect x="4" y="7" width="1" height="1" fill="#88e030"/><rect x="5" y="7" width="1" height="1" fill="#88e030"/><rect x="6" y="7" width="1" height="1" fill="#88e030"/><rect x="7" y="7" width="1" height="1" fill="#88e030"/><rect x="8" y="7" width="1" height="1" fill="#88e030"/><rect x="9" y="7" width="1" height="1" fill="#2e8a1a"/><rect x="10" y="7" width="1" height="1" fill="#58b828"/><rect x="11" y="7" width="1" height="1" fill="#2e8a1a"/><rect x="12" y="7" width="1" height="1" fill="#58b828"/><rect x="13" y="7" width="1" height="1" fill="#2e8a1a"/><rect x="14" y="7" width="1" height="1" fill="#0e5a10"/><rect x="1" y="8" width="1" height="1" fill="#2e8a1a"/><rect x="2" y="8" width="1" height="1" fill="#58b828"/><rect x="3" y="8" width="1" height="1" fill="#88e030"/><rect x="4" y="8" width="1" height="1" fill="#88e030"/><rect x="5" y="8" width="1" height="1" fill="#2e8a1a"/><rect x="6" y="8" width="1" height="1" fill="#88e030"/><rect x="7" y="8" width="1" height="1" fill="#88e030"/><rect x="8" y="8" width="1" height="1" fill="#88e030"/><rect x="9" y="8" width="1" height="1" fill="#58b828"/><rect x="10" y="8" width="1" height="1" fill="#2e8a1a"/><rect x="11" y="8" width="1" height="1" fill="#88e030"/><rect x="12" y="8" width="1" height="1" fill="#2e8a1a"/><rect x="13" y="8" width="1" height="1" fill="#0e5a10"/><rect x="14" y="8" width="1" height="1" fill="#2e8a1a"/><rect x="1" y="9" width="1" height="1" fill="#0e5a10"/><rect x="2" y="9" width="1" height="1" fill="#2e8a1a"/><rect x="3" y="9" width="1" height="1" fill="#88e030"/><rect x="4" y="9" width="1" height="1" fill="#58b828"/><rect x="5" y="9" width="1" height="1" fill="#88e030"/><rect x="6" y="9" width="1" height="1" fill="#88e030"/><rect x="7" y="9" width="1" height="1" fill="#88e030"/><rect x="8" y="9" width="1" height="1" fill="#88e030"/><rect x="9" y="9" width="1" height="1" fill="#88e030"/><rect x="10" y="9" width="1" height="1" fill="#58b828"/><rect x="11" y="9" width="1" height="1" fill="#88e030"/><rect x="12" y="9" width="1" height="1" fill="#2e8a1a"/><rect x="13" y="9" width="1" height="1" fill="#58b828"/><rect x="14" y="9" width="1" height="1" fill="#0e5a10"/><rect x="1" y="10" width="1" height="1" fill="#2e8a1a"/><rect x="2" y="10" width="1" height="1" fill="#0e5a10"/><rect x="3" y="10" width="1" height="1" fill="#58b828"/><rect x="4" y="10" width="1" height="1" fill="#2e8a1a"/><rect x="5" y="10" width="1" height="1" fill="#88e030"/><rect x="6" y="10" width="1" height="1" fill="#88e030"/><rect x="7" y="10" width="1" height="1" fill="#88e030"/><rect x="8" y="10" width="1" height="1" fill="#88e030"/><rect x="9" y="10" width="1" height="1" fill="#88e030"/><rect x="10" y="10" width="1" height="1" fill="#2e8a1a"/><rect x="11" y="10" width="1" height="1" fill="#58b828"/><rect x="12" y="10" width="1" height="1" fill="#2e8a1a"/><rect x="13" y="10" width="1" height="1" fill="#0e5a10"/><rect x="14" y="10" width="1" height="1" fill="#2e8a1a"/><rect x="1" y="11" width="1" height="1" fill="#0e5a10"/><rect x="2" y="11" width="1" height="1" fill="#2e8a1a"/><rect x="3" y="11" width="1" height="1" fill="#58b828"/><rect x="4" y="11" width="1" height="1" fill="#2e8a1a"/><rect x="5" y="11" width="1" height="1" fill="#58b828"/><rect x="6" y="11" width="1" height="1" fill="#88e030"/><rect x="7" y="11" width="1" height="1" fill="#88e030"/><rect x="8" y="11" width="1" height="1" fill="#58b828"/><rect x="9" y="11" width="1" height="1" fill="#88e030"/><rect x="10" y="11" width="1" height="1" fill="#2e8a1a"/><rect x="11" y="11" width="1" height="1" fill="#0e5a10"/><rect x="12" y="11" width="1" height="1" fill="#58b828"/><rect x="13" y="11" width="1" height="1" fill="#2e8a1a"/><rect x="14" y="11" width="1" height="1" fill="#0e5a10"/><rect x="1" y="12" width="1" height="1" fill="#2e8a1a"/><rect x="2" y="12" width="1" height="1" fill="#0e5a10"/><rect x="3" y="12" width="1" height="1" fill="#2e8a1a"/><rect x="4" y="12" width="1" height="1" fill="#58b828"/><rect x="5" y="12" width="1" height="1" fill="#88e030"/><rect x="6" y="12" width="1" height="1" fill="#88e030"/><rect x="7" y="12" width="1" height="1" fill="#88e030"/><rect x="8" y="12" width="1" height="1" fill="#58b828"/><rect x="9" y="12" width="1" height="1" fill="#2e8a1a"/><rect x="10" y="12" width="1" height="1" fill="#58b828"/><rect x="11" y="12" width="1" height="1" fill="#2e8a1a"/><rect x="12" y="12" width="1" height="1" fill="#0e5a10"/><rect x="13" y="12" width="1" height="1" fill="#2e8a1a"/><rect x="14" y="12" width="1" height="1" fill="#0e5a10"/><rect x="1" y="13" width="1" height="1" fill="#0e5a10"/><rect x="2" y="13" width="1" height="1" fill="#2e8a1a"/><rect x="3" y="13" width="1" height="1" fill="#0e5a10"/><rect x="4" y="13" width="1" height="1" fill="#2e8a1a"/><rect x="5" y="13" width="1" height="1" fill="#58b828"/><rect x="6" y="13" width="1" height="1" fill="#2e8a1a"/><rect x="7" y="13" width="1" height="1" fill="#88e030"/><rect x="8" y="13" width="1" height="1" fill="#58b828"/><rect x="9" y="13" width="1" height="1" fill="#2e8a1a"/><rect x="10" y="13" width="1" height="1" fill="#0e5a10"/><rect x="11" y="13" width="1" height="1" fill="#2e8a1a"/><rect x="12" y="13" width="1" height="1" fill="#58b828"/><rect x="13" y="13" width="1" height="1" fill="#0e5a10"/><rect x="14" y="13" width="1" height="1" fill="#2e8a1a"/><rect x="1" y="14" width="1" height="1" fill="#2e8a1a"/><rect x="2" y="14" width="1" height="1" fill="#0e5a10"/><rect x="3" y="14" width="1" height="1" fill="#2e8a1a"/><rect x="4" y="14" width="1" height="1" fill="#0e5a10"/><rect x="5" y="14" width="1" height="1" fill="#2e8a1a"/><rect x="6" y="14" width="1" height="1" fill="#0e5a10"/><rect x="7" y="14" width="1" height="1" fill="#2e8a1a"/><rect x="8" y="14" width="1" height="1" fill="#0e5a10"/><rect x="9" y="14" width="1" height="1" fill="#2e8a1a"/><rect x="10" y="14" width="1" height="1" fill="#0e5a10"/><rect x="11" y="14" width="1" height="1" fill="#2e8a1a"/><rect x="12" y="14" width="1" height="1" fill="#0e5a10"/><rect x="13" y="14" width="1" height="1" fill="#2e8a1a"/><rect x="14" y="14" width="1" height="1" fill="#0e5a10"/></svg>
<div class="t" style="left:264px;top:6.8px;font-size:12px;line-height:12px;font-weight:bold;color:#fff;letter-spacing:0px;">Расчет геометрических параметров печатного монтажа</div>
<div style="left:744px;top:6px;width:14px;height:12px;border-top:1px solid #fff;border-left:1px solid #fff;border-right:1px solid #404040;border-bottom:1px solid #404040;background:#d4d0c8"></div>
<div style="left:745px;top:7px;width:12px;height:10px;border-right:1px solid #808080;border-bottom:1px solid #808080;"></div>
<div style="left:748px;top:15px;width:6px;height:2px;background:#000"></div>
<div style="left:760px;top:6px;width:14px;height:12px;border-top:1px solid #fff;border-left:1px solid #fff;border-right:1px solid #404040;border-bottom:1px solid #404040;background:#d4d0c8"></div>
<div style="left:761px;top:7px;width:12px;height:10px;border-right:1px solid #808080;border-bottom:1px solid #808080;"></div>
<div style="left:764px;top:9px;width:7px;height:6px;border:1px solid #fff;border-top-width:2px"></div>
<div style="left:763px;top:8px;width:7px;height:6px;border:1px solid #808080;border-top-width:2px"></div>
<div style="left:778px;top:6px;width:14px;height:12px;border-top:1px solid #fff;border-left:1px solid #fff;border-right:1px solid #404040;border-bottom:1px solid #404040;background:#d4d0c8"></div>
<div style="left:779px;top:7px;width:12px;height:10px;border-right:1px solid #808080;border-bottom:1px solid #808080;"></div>
<svg style="position:absolute;left:782px;top:9px" width="8" height="7" viewBox="0 0 8 7"><path d="M0.7 0 L7.3 7 M7.3 0 L0.7 7" stroke="#000" stroke-width="1.7"/></svg>
<div class="t" style="left:250px;top:26.65px;font-size:11px;line-height:11px;font-weight:normal;color:#000;letter-spacing:0px;">Файл</div>
<div class="t" style="left:288px;top:26.65px;font-size:11px;line-height:11px;font-weight:normal;color:#000;letter-spacing:0px;">Окна</div>
<div class="t" style="left:326px;top:26.65px;font-size:11px;line-height:11px;font-weight:normal;color:#000;letter-spacing:-0.35px;">О программе</div>
<div style="left:244px;top:65px;width:552px;height:418px;border-top:1px solid #fff;border-left:1px solid #fff;border-right:1px solid #404040;border-bottom:1px solid #404040;box-sizing:border-box"></div>
<div style="left:245px;top:66px;width:550px;height:416px;border-right:1px solid #808080;border-bottom:1px solid #808080;box-sizing:border-box"></div>
<div style="left:392px;top:45px;width:58px;height:20px;background:#d4d0c8;border-top:1px solid #fff;border-left:1px solid #fff;border-right:1px solid #404040;box-sizing:border-box;border-radius:2px 2px 0 0"></div>
<div style="left:448px;top:46px;width:1px;height:19px;background:#808080"></div>
<div style="left:450px;top:45px;width:60px;height:20px;background:#d4d0c8;border-top:1px solid #fff;border-left:1px solid #fff;border-right:1px solid #404040;box-sizing:border-box;border-radius:2px 2px 0 0"></div>
<div style="left:508px;top:46px;width:1px;height:19px;background:#808080"></div>
<div style="left:510px;top:45px;width:60px;height:20px;background:#d4d0c8;border-top:1px solid #fff;border-left:1px solid #fff;border-right:1px solid #404040;box-sizing:border-box;border-radius:2px 2px 0 0"></div>
<div style="left:568px;top:46px;width:1px;height:19px;background:#808080"></div>
<div style="left:570px;top:45px;width:89px;height:20px;background:#d4d0c8;border-top:1px solid #fff;border-left:1px solid #fff;border-right:1px solid #404040;box-sizing:border-box;border-radius:2px 2px 0 0"></div>
<div style="left:657px;top:46px;width:1px;height:19px;background:#808080"></div>
<div style="left:244px;top:42px;width:148px;height:24px;background:#d4d0c8;border-top:1px solid #fff;border-left:1px solid #fff;border-right:1px solid #404040;box-sizing:border-box;border-radius:2px 2px 0 0"></div>
<div style="left:390px;top:43px;width:1px;height:23px;background:#808080"></div>
<div class="t" style="left:252.3px;top:46.0px;font-size:14px;line-height:14px;font-weight:bold;color:#000;transform:scaleX(1.0150);transform-origin:0 0;">Исходные данные</div>
<div class="t" style="left:396.7px;top:48.0px;font-size:14px;line-height:14px;font-weight:bold;color:#000;transform:scaleX(1.0480);transform-origin:0 0;">КП-КП</div>
<div class="t" style="left:456.6px;top:48.0px;font-size:14px;line-height:14px;font-weight:bold;color:#000;transform:scaleX(1.0377);transform-origin:0 0;">КП-П</div>
<div class="t" style="left:516.8px;top:48.0px;font-size:14px;line-height:14px;font-weight:bold;color:#000;transform:scaleX(1.0324);transform-origin:0 0;">П-П</div>
<div class="t" style="left:576.6px;top:47.7px;font-size:14px;line-height:14px;font-weight:bold;color:#000;transform:scaleX(1.0436);transform-origin:0 0;">Мин расст</div>
<div style="left:257px;top:83px;width:193px;height:137px;border:1px solid #fff;"></div>
<div style="left:256px;top:82px;width:193px;height:137px;border:1px solid #808080;"></div>
<div style="left:263.5px;top:81px;width:179.2px;height:4px;background:#d4d0c8"></div>
<div class="t" style="left:265.5px;top:77.4px;font-size:12px;line-height:12px;font-weight:bold;color:#000;transform:scaleX(1.0095);transform-origin:0 0;">Технология изготовления ПП</div>
<div style="left:461px;top:83px;width:191px;height:137px;border:1px solid #fff;"></div>
<div style="left:460px;top:82px;width:191px;height:137px;border:1px solid #808080;"></div>
<div style="left:466.5px;top:81px;width:179px;height:4px;background:#d4d0c8"></div>
<div class="t" style="left:468.5px;top:77.4px;font-size:12px;line-height:12px;font-weight:bold;color:#000;transform:scaleX(1.0120);transform-origin:0 0;">Метод изготовления рисунка</div>
<div style="left:662px;top:83px;width:118px;height:137px;border:1px solid #fff;"></div>
<div style="left:661px;top:82px;width:118px;height:137px;border:1px solid #808080;"></div>
<div style="left:667.8px;top:81px;width:104.4px;height:4px;background:#d4d0c8"></div>
<div class="t" style="left:669.8px;top:77.4px;font-size:12px;line-height:12px;font-weight:bold;color:#000;transform:scaleX(1.0012);transform-origin:0 0;">Класс плотности</div>
<svg style="position:absolute;left:265px;top:105px" width="12" height="12" viewBox="0 0 12 12"><circle cx="6" cy="6" r="6" fill="#808080" clip-path="url(#rtl)"/><circle cx="6" cy="6" r="6" fill="#fff" clip-path="url(#rbr)"/><circle cx="6" cy="6" r="5" fill="#404040" clip-path="url(#rtl)"/><circle cx="6" cy="6" r="5" fill="#d4d0c8" clip-path="url(#rbr)"/><circle cx="6" cy="6" r="4" fill="#fff"/><circle cx="6" cy="6" r="2" fill="#000"/></svg>
<div class="t" style="left:283.8px;top:105.6px;font-size:12px;line-height:12px;font-weight:bold;color:#000;transform:scaleX(0.9778);transform-origin:0 0;">Субтрактивная</div>
<svg style="position:absolute;left:265px;top:148px" width="12" height="12" viewBox="0 0 12 12"><circle cx="6" cy="6" r="6" fill="#808080" clip-path="url(#rtl)"/><circle cx="6" cy="6" r="6" fill="#fff" clip-path="url(#rbr)"/><circle cx="6" cy="6" r="5" fill="#404040" clip-path="url(#rtl)"/><circle cx="6" cy="6" r="5" fill="#d4d0c8" clip-path="url(#rbr)"/><circle cx="6" cy="6" r="4" fill="#fff"/></svg>
<div class="t" style="left:283.8px;top:147.6px;font-size:12px;line-height:12px;font-weight:bold;color:#000;transform:scaleX(0.9568);transform-origin:0 0;">Аддитивная</div>
<svg style="position:absolute;left:265px;top:189px" width="12" height="12" viewBox="0 0 12 12"><circle cx="6" cy="6" r="6" fill="#808080" clip-path="url(#rtl)"/><circle cx="6" cy="6" r="6" fill="#fff" clip-path="url(#rbr)"/><circle cx="6" cy="6" r="5" fill="#404040" clip-path="url(#rtl)"/><circle cx="6" cy="6" r="5" fill="#d4d0c8" clip-path="url(#rbr)"/><circle cx="6" cy="6" r="4" fill="#fff"/></svg>
<div class="t" style="left:283.8px;top:189.0px;font-size:12px;line-height:12px;font-weight:bold;color:#000;transform:scaleX(0.9867);transform-origin:0 0;">Комбинированная</div>
<div style="left:282px;top:104px;width:92px;height:16px;border:1px dotted #000;box-sizing:border-box"></div>
<svg style="position:absolute;left:469px;top:105px" width="12" height="12" viewBox="0 0 12 12"><circle cx="6" cy="6" r="6" fill="#808080" clip-path="url(#rtl)"/><circle cx="6" cy="6" r="6" fill="#fff" clip-path="url(#rbr)"/><circle cx="6" cy="6" r="5" fill="#404040" clip-path="url(#rtl)"/><circle cx="6" cy="6" r="5" fill="#d4d0c8" clip-path="url(#rbr)"/><circle cx="6" cy="6" r="4" fill="#fff"/><circle cx="6" cy="6" r="2" fill="#000"/></svg>
<div class="t" style="left:487.6px;top:105.6px;font-size:12px;line-height:12px;font-weight:bold;color:#000;transform:scaleX(0.9988);transform-origin:0 0;">Фотографический</div>
<svg style="position:absolute;left:469px;top:148px" width="12" height="12" viewBox="0 0 12 12"><circle cx="6" cy="6" r="6" fill="#808080" clip-path="url(#rtl)"/><circle cx="6" cy="6" r="6" fill="#fff" clip-path="url(#rbr)"/><circle cx="6" cy="6" r="5" fill="#404040" clip-path="url(#rtl)"/><circle cx="6" cy="6" r="5" fill="#d4d0c8" clip-path="url(#rbr)"/><circle cx="6" cy="6" r="4" fill="#fff"/></svg>
<div class="t" style="left:487.6px;top:147.6px;font-size:12px;line-height:12px;font-weight:bold;color:#000;transform:scaleX(0.9758);transform-origin:0 0;">Сеточнографический</div>
<svg style="position:absolute;left:469px;top:189px" width="12" height="12" viewBox="0 0 12 12"><circle cx="6" cy="6" r="6" fill="#808080" clip-path="url(#rtl)"/><circle cx="6" cy="6" r="6" fill="#fff" clip-path="url(#rbr)"/><circle cx="6" cy="6" r="5" fill="#404040" clip-path="url(#rtl)"/><circle cx="6" cy="6" r="5" fill="#d4d0c8" clip-path="url(#rbr)"/><circle cx="6" cy="6" r="4" fill="#fff"/></svg>
<div class="t" style="left:487.6px;top:189.0px;font-size:12px;line-height:12px;font-weight:bold;color:#000;transform:scaleX(0.9837);transform-origin:0 0;">Офсетная печать</div>
<svg style="position:absolute;left:678px;top:103px" width="12" height="12" viewBox="0 0 12 12"><circle cx="6" cy="6" r="6" fill="#808080" clip-path="url(#rtl)"/><circle cx="6" cy="6" r="6" fill="#fff" clip-path="url(#rbr)"/><circle cx="6" cy="6" r="5" fill="#404040" clip-path="url(#rtl)"/><circle cx="6" cy="6" r="5" fill="#d4d0c8" clip-path="url(#rbr)"/><circle cx="6" cy="6" r="4" fill="#fff"/></svg>
<div class="t" style="left:696.7px;top:103.3px;font-size:12px;line-height:12px;font-weight:bold;color:#000;transform:scaleX(0.9530);transform-origin:0 0;">Первый</div>
<svg style="position:absolute;left:678px;top:127px" width="12" height="12" viewBox="0 0 12 12"><circle cx="6" cy="6" r="6" fill="#808080" clip-path="url(#rtl)"/><circle cx="6" cy="6" r="6" fill="#fff" clip-path="url(#rbr)"/><circle cx="6" cy="6" r="5" fill="#404040" clip-path="url(#rtl)"/><circle cx="6" cy="6" r="5" fill="#d4d0c8" clip-path="url(#rbr)"/><circle cx="6" cy="6" r="4" fill="#fff"/><circle cx="6" cy="6" r="2" fill="#000"/></svg>
<div class="t" style="left:696.7px;top:127.0px;font-size:12px;line-height:12px;font-weight:bold;color:#000;transform:scaleX(0.9543);transform-origin:0 0;">Второй</div>
<svg style="position:absolute;left:678px;top:151px" width="12" height="12" viewBox="0 0 12 12"><circle cx="6" cy="6" r="6" fill="#808080" clip-path="url(#rtl)"/><circle cx="6" cy="6" r="6" fill="#fff" clip-path="url(#rbr)"/><circle cx="6" cy="6" r="5" fill="#404040" clip-path="url(#rtl)"/><circle cx="6" cy="6" r="5" fill="#d4d0c8" clip-path="url(#rbr)"/><circle cx="6" cy="6" r="4" fill="#fff"/></svg>
<div class="t" style="left:696.7px;top:151.0px;font-size:12px;line-height:12px;font-weight:bold;color:#000;transform:scaleX(1.0058);transform-origin:0 0;">Третий</div>
<svg style="position:absolute;left:678px;top:175px" width="12" height="12" viewBox="0 0 12 12"><circle cx="6" cy="6" r="6" fill="#808080" clip-path="url(#rtl)"/><circle cx="6" cy="6" r="6" fill="#fff" clip-path="url(#rbr)"/><circle cx="6" cy="6" r="5" fill="#404040" clip-path="url(#rtl)"/><circle cx="6" cy="6" r="5" fill="#d4d0c8" clip-path="url(#rbr)"/><circle cx="6" cy="6" r="4" fill="#fff"/></svg>
<div class="t" style="left:696.7px;top:174.8px;font-size:12px;line-height:12px;font-weight:bold;color:#000;transform:scaleX(0.9894);transform-origin:0 0;">Четвертый</div>
<svg style="position:absolute;left:678px;top:199px" width="12" height="12" viewBox="0 0 12 12"><circle cx="6" cy="6" r="6" fill="#808080" clip-path="url(#rtl)"/><circle cx="6" cy="6" r="6" fill="#fff" clip-path="url(#rbr)"/><circle cx="6" cy="6" r="5" fill="#404040" clip-path="url(#rtl)"/><circle cx="6" cy="6" r="5" fill="#d4d0c8" clip-path="url(#rbr)"/><circle cx="6" cy="6" r="4" fill="#fff"/></svg>
<div class="t" style="left:696.7px;top:198.6px;font-size:12px;line-height:12px;font-weight:bold;color:#000;transform:scaleX(0.9657);transform-origin:0 0;">Пятый</div>
<div style="left:258px;top:237px;width:525px;height:183px;border:1px solid #fff;"></div>
<div style="left:257px;top:236px;width:525px;height:183px;border:1px solid #808080;"></div>
<div class="t" style="left:263px;top:229.5px;font-size:14px;line-height:14px;font-weight:bold;background:#d4d0c8;padding:0 1px">Толщины</div>
<div class="t" style="left:273px;top:271.45px;font-size:13px;line-height:13px;font-weight:bold;color:#000;transform:scaleX(1.0725);transform-origin:0 0;">фольги</div>
<div class="t" style="left:272.4px;top:310.45px;font-size:13px;line-height:13px;font-weight:bold;color:#000;transform:scaleX(1.1360);transform-origin:0 0;">предварительно осажденной меди</div>
<div class="t" style="left:272.4px;top:350.65px;font-size:13px;line-height:13px;font-weight:bold;color:#000;transform:scaleX(1.1809);transform-origin:0 0;">металического резиста</div>
<div class="t" style="left:272.4px;top:390.25px;font-size:13px;line-height:13px;font-weight:bold;color:#000;transform:scaleX(1.1413);transform-origin:0 0;">наращенной гальванической меди</div>
<div class="t" style="left:543.9px;top:310.75px;font-size:13px;line-height:13px;font-weight:bold;color:#000;transform:scaleX(1.0840);transform-origin:0 0;">(0,005-0,008) мм.</div>
<div class="t" style="left:562.8px;top:350.95px;font-size:13px;line-height:13px;font-weight:bold;color:#000;transform:scaleX(1.0582);transform-origin:0 0;">(0,02-0,03) мм.</div>
<div class="t" style="left:565.6px;top:390.45px;font-size:13px;line-height:13px;font-weight:bold;color:#000;transform:scaleX(1.0815);transform-origin:0 0;">(0,05-0,06) мм.</div>
<div style="left:664px;top:262px;width:78px;height:21px;border-top:1px solid #808080;border-left:1px solid #808080;border-right:1px solid #fff;border-bottom:1px solid #fff;"></div>
<div style="left:665px;top:263px;width:62px;height:19px;border-top:1px solid #404040;border-left:1px solid #404040;border-bottom:1px solid #d4d0c8;background:#fff"></div>
<div style="left:728px;top:263px;width:13px;height:8px;border-top:1px solid #fff;border-left:1px solid #fff;border-right:1px solid #404040;border-bottom:1px solid #404040;background:linear-gradient(to right,#d4d0c8 0,#d4d0c8 66%,#c8e0b0 74%,#a0e060 86%,#b0c0a0 100%)"></div>
<svg style="position:absolute;left:731.5px;top:266px" width="8" height="4" viewBox="0 0 8 4"><path d="M4 0 L8 4 L0 4 Z" fill="#000"/></svg>
<div style="left:728px;top:273px;width:13px;height:9px;border-top:1px solid #fff;border-left:1px solid #fff;border-right:1px solid #404040;border-bottom:1px solid #404040;background:linear-gradient(to right,#d4d0c8 0,#d4d0c8 66%,#c8e0b0 74%,#a0e060 86%,#b0c0a0 100%)"></div>
<svg style="position:absolute;left:731.5px;top:276px" width="8" height="4" viewBox="0 0 8 4"><path d="M0 0 L8 0 L4 4 Z" fill="#000"/></svg>
<div class="t" style="left:668px;top:265.6px;font-size:14px;line-height:14px;font-weight:bold;color:#000;letter-spacing:0px;">0,035</div>
<div class="t" style="left:746.3px;top:271.3px;font-size:12px;line-height:12px;font-weight:bold;color:#000;transform:scaleX(1.0856);transform-origin:0 0;">мм.</div>
<div style="left:664px;top:302px;width:78px;height:21px;border-top:1px solid #808080;border-left:1px solid #808080;border-right:1px solid #fff;border-bottom:1px solid #fff;"></div>
<div style="left:665px;top:303px;width:62px;height:19px;border-top:1px solid #404040;border-left:1px solid #404040;border-bottom:1px solid #d4d0c8;background:#d4d0c8"></div>
<div style="left:728px;top:303px;width:13px;height:8px;border-top:1px solid #fff;border-left:1px solid #fff;border-right:1px solid #404040;border-bottom:1px solid #404040;background:linear-gradient(to right,#d4d0c8 0,#d4d0c8 66%,#c8e0b0 74%,#a0e060 86%,#b0c0a0 100%)"></div>
<svg style="position:absolute;left:731.5px;top:306px" width="8" height="4" viewBox="0 0 8 4"><path d="M4 0 L8 4 L0 4 Z" fill="#000"/></svg>
<div style="left:728px;top:313px;width:13px;height:9px;border-top:1px solid #fff;border-left:1px solid #fff;border-right:1px solid #404040;border-bottom:1px solid #404040;background:linear-gradient(to right,#d4d0c8 0,#d4d0c8 66%,#c8e0b0 74%,#a0e060 86%,#b0c0a0 100%)"></div>
<svg style="position:absolute;left:731.5px;top:316px" width="8" height="4" viewBox="0 0 8 4"><path d="M0 0 L8 0 L4 4 Z" fill="#000"/></svg>
<div class="t" style="left:668px;top:304.6px;font-size:14px;line-height:14px;font-weight:bold;color:#808080;letter-spacing:0px;">0,005</div>
<div class="t" style="left:746.3px;top:311.1px;font-size:12px;line-height:12px;font-weight:bold;color:#000;transform:scaleX(1.0856);transform-origin:0 0;">мм.</div>
<div style="left:664px;top:341px;width:78px;height:21px;border-top:1px solid #808080;border-left:1px solid #808080;border-right:1px solid #fff;border-bottom:1px solid #fff;"></div>
<div style="left:665px;top:342px;width:62px;height:19px;border-top:1px solid #404040;border-left:1px solid #404040;border-bottom:1px solid #d4d0c8;background:#d4d0c8"></div>
<div style="left:728px;top:342px;width:13px;height:8px;border-top:1px solid #fff;border-left:1px solid #fff;border-right:1px solid #404040;border-bottom:1px solid #404040;background:linear-gradient(to right,#d4d0c8 0,#d4d0c8 66%,#c8e0b0 74%,#a0e060 86%,#b0c0a0 100%)"></div>
<svg style="position:absolute;left:731.5px;top:345px" width="8" height="4" viewBox="0 0 8 4"><path d="M4 0 L8 4 L0 4 Z" fill="#000"/></svg>
<div style="left:728px;top:352px;width:13px;height:9px;border-top:1px solid #fff;border-left:1px solid #fff;border-right:1px solid #404040;border-bottom:1px solid #404040;background:linear-gradient(to right,#d4d0c8 0,#d4d0c8 66%,#c8e0b0 74%,#a0e060 86%,#b0c0a0 100%)"></div>
<svg style="position:absolute;left:731.5px;top:355px" width="8" height="4" viewBox="0 0 8 4"><path d="M0 0 L8 0 L4 4 Z" fill="#000"/></svg>
<div class="t" style="left:668px;top:344.6px;font-size:14px;line-height:14px;font-weight:bold;color:#808080;letter-spacing:0px;">0,02</div>
<div class="t" style="left:750.2px;top:351.2px;font-size:12px;line-height:12px;font-weight:bold;color:#000;transform:scaleX(1.0245);transform-origin:0 0;">мм</div>
<div style="left:664px;top:381px;width:78px;height:21px;border-top:1px solid #808080;border-left:1px solid #808080;border-right:1px solid #fff;border-bottom:1px solid #fff;"></div>
<div style="left:665px;top:382px;width:62px;height:19px;border-top:1px solid #404040;border-left:1px solid #404040;border-bottom:1px solid #d4d0c8;background:#d4d0c8"></div>
<div style="left:728px;top:382px;width:13px;height:8px;border-top:1px solid #fff;border-left:1px solid #fff;border-right:1px solid #404040;border-bottom:1px solid #404040;background:linear-gradient(to right,#d4d0c8 0,#d4d0c8 66%,#c8e0b0 74%,#a0e060 86%,#b0c0a0 100%)"></div>
<svg style="position:absolute;left:731.5px;top:385px" width="8" height="4" viewBox="0 0 8 4"><path d="M4 0 L8 4 L0 4 Z" fill="#000"/></svg>
<div style="left:728px;top:392px;width:13px;height:9px;border-top:1px solid #fff;border-left:1px solid #fff;border-right:1px solid #404040;border-bottom:1px solid #404040;background:linear-gradient(to right,#d4d0c8 0,#d4d0c8 66%,#c8e0b0 74%,#a0e060 86%,#b0c0a0 100%)"></div>
<svg style="position:absolute;left:731.5px;top:395px" width="8" height="4" viewBox="0 0 8 4"><path d="M0 0 L8 0 L4 4 Z" fill="#000"/></svg>
<div class="t" style="left:668px;top:384.6px;font-size:14px;line-height:14px;font-weight:bold;color:#808080;letter-spacing:0px;">0,05</div>
<div class="t" style="left:748.9px;top:390.6px;font-size:12px;line-height:12px;font-weight:bold;color:#000;transform:scaleX(1.0477);transform-origin:0 0;">мм.</div>
<div style="left:688px;top:437px;width:87px;height:31px;border-top:1px solid #fff;border-left:1px solid #fff;border-right:1px solid #404040;border-bottom:1px solid #404040;background:#d4d0c8"></div>
<div style="left:689px;top:438px;width:85px;height:29px;border-right:1px solid #808080;border-bottom:1px solid #808080;"></div>
<div class="t" style="left:710px;top:446.95px;font-size:13px;line-height:13px;font-weight:bold;color:#000;letter-spacing:0.1px;">Выход</div>
</body></html>
